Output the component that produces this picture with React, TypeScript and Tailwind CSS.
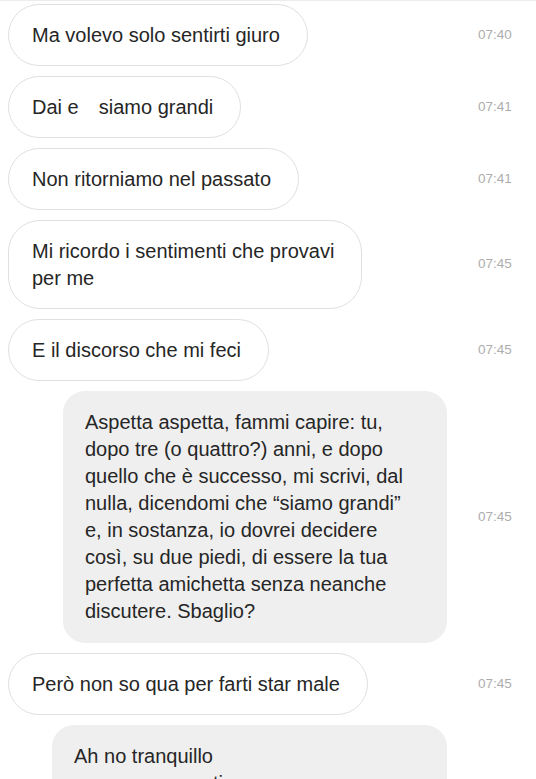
import React from "react";

type Msg = {
  lines: React.ReactNode[];
  time?: string;
  mine?: boolean;
  indent?: string;
};

const messages: Msg[] = [
  { lines: ["Ma volevo solo sentirti giuro"], time: "07:40" },
  {
    lines: [
      <>
        Dai e <span className="inline-block w-[9px]" /> siamo grandi
      </>,
    ],
    time: "07:41",
  },
  { lines: ["Non ritorniamo nel passato"], time: "07:41" },
  { lines: ["Mi ricordo i sentimenti che provavi", "per me"], time: "07:45" },
  { lines: ["E il discorso che mi feci"], time: "07:45" },
  {
    mine: true,
    indent: "ml-[55px]",
    lines: [
      "Aspetta aspetta, fammi capire: tu,",
      "dopo tre (o quattro?) anni, e dopo",
      "quello che è successo, mi scrivi, dal",
      "nulla, dicendomi che “siamo grandi”",
      "e, in sostanza, io dovrei decidere",
      "così, su due piedi, di essere la tua",
      "perfetta amichetta senza neanche",
      "discutere. Sbaglio?",
    ],
    time: "07:45",
  },
  { lines: ["Però non so qua per farti star male"], time: "07:45" },
  {
    mine: true,
    indent: "ml-[44px]",
    lines: ["Ah no tranquillo", "non preoccuparti"],
  },
];

const Bubble = ({ msg }: { msg: Msg }) => {
  if (msg.mine) {
    return (
      <div
        className={`${msg.indent} mr-[31px] flex-1 rounded-[22px] bg-[#efefef] py-[18px] pl-[22px] pr-6 leading-[27px]`}
      >
        {msg.lines.map((l, i) => (
          <div key={i} className="whitespace-nowrap">
            {l}
          </div>
        ))}
      </div>
    );
  }
  return (
    <div className="rounded-[32px] border border-[#e0e0e0] bg-white py-[16.5px] pl-[23px] pr-[27px] leading-[27px]">
      {msg.lines.map((l, i) => (
        <div key={i} className="whitespace-nowrap">
          {l}
        </div>
      ))}
    </div>
  );
};

export default function App() {
  return (
    <div
      className="h-[779px] w-[536px] overflow-hidden border-t border-[#ececec] bg-white pt-[3px] text-[20px] text-[#262626]"
      style={{ fontFamily: '"Liberation Sans", Arial, sans-serif' }}
    >
      <div className="flex flex-col gap-[10px]">
        {messages.map((m, i) => (
          <div key={i} className="flex items-center">
            <div className="flex min-w-0 flex-1 pl-2">
              <Bubble msg={m} />
            </div>
            <span className="w-[58px] shrink-0 text-[13.5px] text-[#adadad]">
              {m.time}
            </span>
          </div>
        ))}
      </div>
    </div>
  );
}
